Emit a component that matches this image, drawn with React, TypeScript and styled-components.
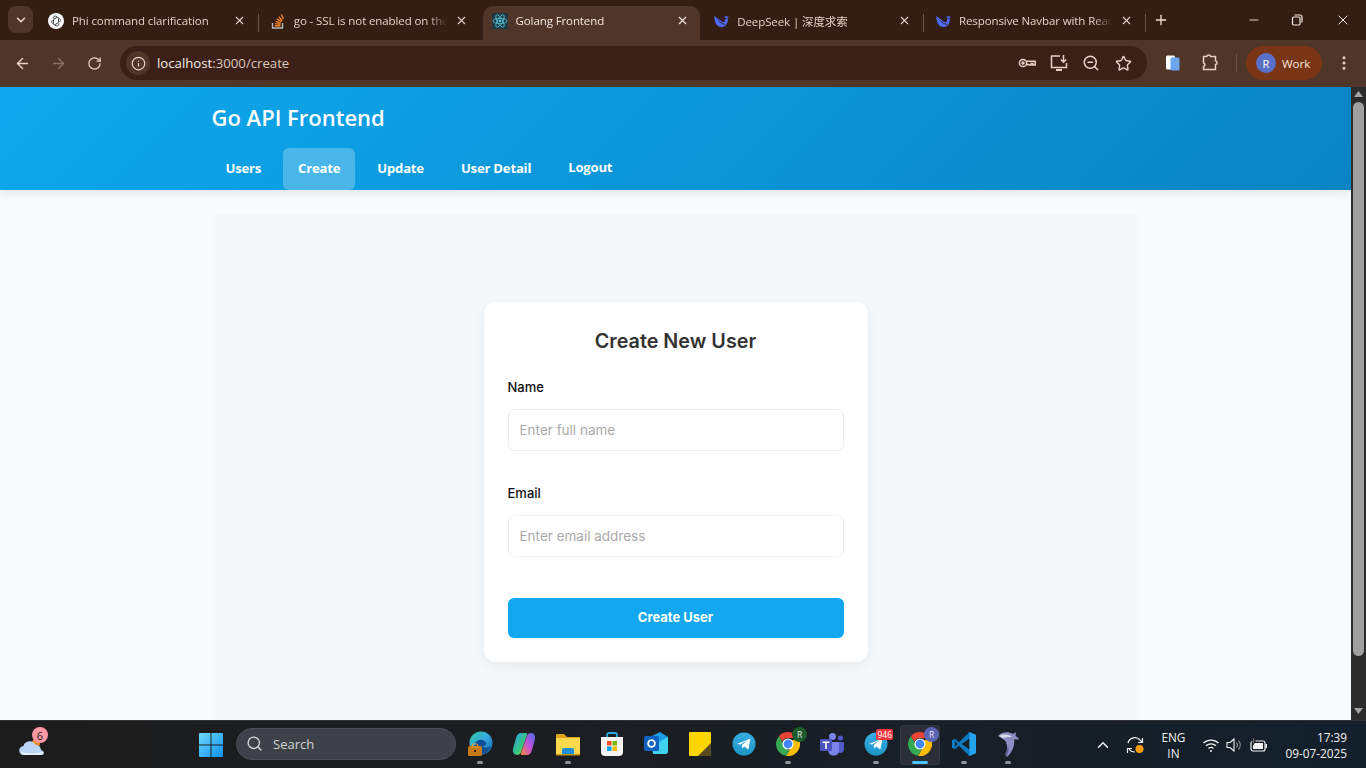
import styled, { createGlobalStyle } from 'styled-components'
import {
  ArrowLeft,
  ArrowRight,
  ChevronDown,
  ChevronUp,
  Info,
  Minus,
  MoreVertical,
  Plus,
  RotateCw,
  Search,
  Star,
  X,
  ZoomOut,
} from 'lucide-react'
import type { ReactNode } from 'react'

const uiFont = `'Open Sans', 'Noto Sans CJK SC', sans-serif`
const formFont = `'Inter', 'Open Sans', sans-serif`

/* --------------------- Style --------------------- */
const GlobalStyle = createGlobalStyle`
  * { box-sizing: border-box; }
  html, body { margin: 0; height: 100%; overflow: hidden; }
  body { font-family: ${uiFont}; }
`
const Screen = styled.div`
  height: 768px;
  display: flex;
  flex-direction: column;
  overflow: hidden;
`
const TabStrip = styled.div`
  height: 40px;
  flex: none;
  display: flex;
  align-items: flex-end;
  padding-left: 8px;
  background: #341d13;
`
const TabMenu = styled.div`
  width: 25px;
  height: 27px;
  margin: 0 6px 7px 0;
  display: flex;
  align-items: center;
  justify-content: center;
  border-radius: 8px;
  background: #503529;
  color: #f0e0d8;
`
const TabItem = styled.div<{ $active?: boolean; $divider?: boolean }>`
  position: relative;
  width: 217.75px;
  height: 34px;
  margin-right: 4px;
  padding: 0 11px 5px 9px;
  display: flex;
  align-items: center;
  gap: 8px;
  border-radius: 10px 10px 0 0;
  background: ${(p) => (p.$active ? '#503529' : 'transparent')};
  color: ${(p) => (p.$active ? '#f5e9e2' : '#e3d0c6')};
  &::after {
    content: '';
    display: ${(p) => (p.$divider ? 'block' : 'none')};
    position: absolute;
    right: -2px;
    top: 8px;
    width: 1px;
    height: 18px;
    background: #6e5548;
  }
`
const TabTitle = styled.span`
  flex: 1;
  min-width: 0;
  overflow: hidden;
  white-space: nowrap;
  font-size: 11.5px;
  letter-spacing: -0.1px;
  -webkit-mask-image: linear-gradient(to right, #000 88%, transparent);
  mask-image: linear-gradient(to right, #000 88%, transparent);
`
const NewTab = styled.div`
  margin: 0 0 6px 5px;
  height: 28px;
  display: flex;
  align-items: center;
  color: #f0e0d8;
`
const WindowControls = styled.div`
  margin-left: auto;
  align-self: stretch;
  display: flex;
  align-items: center;
  color: #f5ece7;
`
const WindowButton = styled.div`
  width: 46px;
  display: flex;
  justify-content: center;
  &:first-child {
    width: 40px;
  }
`
const Toolbar = styled.div`
  height: 47px;
  flex: none;
  display: flex;
  align-items: center;
  padding: 0 10px 1px 4px;
  background: #503529;
  color: #e8d2c7;
`
const NavIcon = styled.div<{ $dim?: boolean }>`
  width: 36px;
  display: flex;
  justify-content: center;
  color: ${(p) => (p.$dim ? '#8b7165' : '#e8d2c7')};
`
const Omnibox = styled.div`
  width: 1027px;
  height: 34px;
  margin-left: 8px;
  display: flex;
  align-items: center;
  padding: 0 14px 0 6px;
  border-radius: 17px;
  background: #3a2016;
`
const SiteInfo = styled.div`
  width: 24px;
  height: 24px;
  display: flex;
  align-items: center;
  justify-content: center;
  border-radius: 50%;
  background: #503529;
`
const Url = styled.span`
  margin-left: 7px;
  font-size: 13.2px;
  color: #dcc8bd;
  & b {
    font-weight: 400;
    color: #f7ece6;
  }
`
const OmniActions = styled.div`
  margin-left: auto;
  display: flex;
  align-items: center;
  gap: 12px;
`
const OmniAction = styled.div`
  width: 20px;
  display: flex;
  justify-content: center;
`
const ToolbarActions = styled.div`
  display: flex;
  align-items: center;
  margin-left: 17px;
`
const ExtensionSlot = styled.div`
  margin-left: 18px;
  display: flex;
`
const ToolbarDivider = styled.div`
  width: 1px;
  height: 18px;
  margin: 0 9px 0 16px;
  background: #6e5548;
`
const ProfilePill = styled.div`
  width: 76px;
  height: 34px;
  display: flex;
  align-items: center;
  gap: 6px;
  padding-left: 10px;
  border-radius: 17px;
  background: #7a3416;
  color: #f7e8df;
  font-size: 11.5px;
`
const Avatar = styled.div`
  width: 20px;
  height: 20px;
  display: flex;
  align-items: center;
  justify-content: center;
  border-radius: 50%;
  background: #5a6fc8;
  color: #fff;
  font-size: 11px;
`
const MenuDots = styled.div`
  margin-left: 13px;
  display: flex;
`
const Viewport = styled.div`
  flex: 1;
  min-height: 0;
  display: flex;
`
const Page = styled.div`
  flex: 1;
  min-width: 0;
  overflow: hidden;
  background: #f9fafc;
`
const Header = styled.header`
  position: relative;
  height: 103px;
  background: linear-gradient(135deg, #0ea8ee, #0a84c3);
  box-shadow: 0 2px 10px rgba(0, 0, 0, 0.1);
`
const HeaderInner = styled.div`
  width: 928px;
  margin: 0 auto;
`
const Brand = styled.h1`
  margin: 0;
  padding-top: 14px;
  font-size: 22px;
  line-height: 32px;
  font-weight: 600;
  color: #fff;
`
const NavBar = styled.nav`
  display: flex;
  gap: 7px;
  margin: 15px 0 0 -1px;
`
const NavLink = styled.a<{ $active?: boolean }>`
  height: 42px;
  padding: 0 15px 2px;
  display: flex;
  align-items: center;
  border-radius: 6px;
  font-size: 13.1px;
  font-weight: 700;
  letter-spacing: -0.2px;
  color: #fff;
  background: ${(p) => (p.$active ? 'rgba(255, 255, 255, 0.25)' : 'transparent')};
`
const LogoutButton = styled(NavLink)`
  padding-bottom: 4px;
`
const Main = styled.main`
  width: 928px;
  height: 600px;
  margin: 24px auto 0;
  padding-top: 88px;
  display: flex;
  justify-content: center;
  border-radius: 8px;
  background: #f5f8fb;
`
const Card = styled.form`
  width: 384px;
  height: 360px;
  padding: 24px;
  border-radius: 12px;
  background: #fff;
  box-shadow: 0 4px 12px rgba(0, 0, 0, 0.06);
  font-family: ${formFont};
`
const CardTitle = styled.h2`
  margin: 0 0 22px;
  font-size: 19.8px;
  line-height: 30px;
  font-weight: 600;
  text-align: center;
  color: #333;
`
const Field = styled.div`
  margin-bottom: 33px;
  &:last-of-type {
    margin-bottom: 41px;
  }
`
const Label = styled.label`
  display: block;
  margin-bottom: 13px;
  font-size: 13px;
  line-height: 18px;
  font-weight: 500;
  color: #111;
`
const Input = styled.input`
  width: 100%;
  height: 42px;
  padding: 0 11px;
  border: 1px solid #eeeef0;
  border-radius: 7px;
  outline: none;
  font-family: inherit;
  font-size: 13.5px;
  &::placeholder {
    color: #aaa;
    opacity: 1;
  }
`
const SubmitButton = styled.button`
  width: 100%;
  height: 40px;
  padding: 0 0 2px;
  border: 0;
  border-radius: 6px;
  background: #12a7ee;
  color: #fff;
  font-family: inherit;
  font-size: 13px;
  font-weight: 700;
`
const ScrollTrack = styled.div`
  width: 15px;
  flex: none;
  display: flex;
  flex-direction: column;
  align-items: center;
  padding-top: 4px;
  background: #2c2c2c;
  color: #a3a3a3;
`
const ScrollThumb = styled.div`
  width: 11px;
  height: 554px;
  margin: 5px 0 52px;
  border-radius: 6px;
  background: #a0a0a0;
`
const Taskbar = styled.div`
  height: 48px;
  flex: none;
  display: flex;
  align-items: center;
  border-top: 1px solid #303236;
  background: linear-gradient(90deg, #1c1c1c, #1b1e22 45%, #13202c);
  color: #f2f2f2;
`
const Weather = styled.div`
  position: relative;
  width: 28px;
  margin-left: 18px;
  padding-top: 3px;
  display: flex;
`
const WeatherBadge = styled.span`
  position: absolute;
  left: 14px;
  top: -4px;
  width: 16px;
  height: 16px;
  display: flex;
  align-items: center;
  justify-content: center;
  border-radius: 50%;
  background: #ff9aa4;
  color: #222;
  font-size: 11px;
`
const StartIcon = styled.div`
  display: flex;
  margin-left: 153px;
`
const SearchBox = styled.div`
  width: 220px;
  height: 32px;
  margin: 0 0 2px 13px;
  padding-left: 9px;
  display: flex;
  align-items: center;
  gap: 10px;
  border-radius: 16px;
  border: 1px solid #4c4f55;
  background: #3e4148;
  color: #d2d4d6;
  font-size: 13px;
`
const TaskIcons = styled.div`
  display: flex;
  margin-left: 2px;
`
const TaskCell = styled.div<{ $active?: boolean }>`
  position: relative;
  width: 40px;
  height: 40px;
  margin: 0 2px;
  display: flex;
  align-items: center;
  justify-content: center;
  padding-bottom: 2px;
  border-radius: 4px;
  background: ${(p) => (p.$active ? '#2c2f36' : 'transparent')};
  box-shadow: ${(p) => (p.$active ? 'inset 0 0 0 1px #34373d' : 'none')};
`
const RunDot = styled.span<{ $active?: boolean }>`
  position: absolute;
  left: 50%;
  bottom: 1px;
  width: ${(p) => (p.$active ? '16px' : '6px')};
  height: 3px;
  transform: translateX(-50%);
  border-radius: 2px;
  background: ${(p) => (p.$active ? '#4cc2ff' : '#8f9296')};
`
const AccountBadge = styled.span<{ $color: string }>`
  position: absolute;
  right: 1px;
  top: 2px;
  width: 15px;
  height: 15px;
  display: flex;
  align-items: center;
  justify-content: center;
  border-radius: 50%;
  background: ${(p) => p.$color};
  color: #e6e6e6;
  font-size: 8.5px;
`
const CountBadge = styled.span`
  position: absolute;
  right: 3px;
  top: 4px;
  height: 11px;
  padding: 0 1px;
  display: flex;
  align-items: center;
  border-radius: 2px;
  background: #f0393f;
  color: #fff;
  font-size: 8.5px;
`
const Tray = styled.div`
  margin-left: auto;
  display: flex;
  align-items: center;
  height: 100%;
  padding-right: 19px;
  font-size: 11.8px;
`
const TrayIcon = styled.div<{ $gap: number }>`
  display: flex;
  margin-left: ${(p) => p.$gap}px;
`
const Language = styled.div`
  width: 32px;
  margin-left: 12px;
  text-align: center;
  line-height: 16px;
`
const Clock = styled.div`
  margin-left: 16px;
  text-align: right;
  line-height: 16px;
`
/* ------------------------------------------------- */

const ChatIcon = () => (
  <svg width="16" height="16" viewBox="0 0 16 16">
    <circle cx="8" cy="8" r="8" fill="#fff" />
    <g fill="none" stroke="#4a4a4a" strokeWidth="1">
      <path d="M5 5.5a2.2 2.2 0 0 1 4-1.5l2.4 1.4a2.2 2.2 0 0 1 .1 3.6" />
      <path d="M11 10.5a2.2 2.2 0 0 1-4 1.5L4.6 10.6a2.2 2.2 0 0 1-.1-3.6" />
      <path d="M5.5 10.8V6.4L9 4.4M10.5 5.2v4.4L7 11.6" />
    </g>
  </svg>
)
const StackIcon = () => (
  <svg width="16" height="16" viewBox="0 0 16 16">
    <path d="M2.5 10v5h10v-5" fill="none" stroke="#bcbbbb" strokeWidth="1.4" />
    <path
      d="M4.8 12.7h5.6M5 10.6l5.4.8M5.6 8.3l5 1.8M7 5.9l4.4 2.9M8.9 3.8l3.3 3.9M11.4 1.2l2 4.8"
      stroke="#f48024"
      strokeWidth="1.4"
    />
  </svg>
)
const ReactIcon = () => (
  <svg width="16" height="16" viewBox="0 0 16 16">
    <rect width="16" height="16" rx="2" fill="#1d3a44" />
    <g fill="none" stroke="#58c4dc" strokeWidth="0.8">
      <ellipse cx="8" cy="8" rx="7" ry="2.7" />
      <ellipse cx="8" cy="8" rx="7" ry="2.7" transform="rotate(60 8 8)" />
      <ellipse cx="8" cy="8" rx="7" ry="2.7" transform="rotate(120 8 8)" />
    </g>
    <circle cx="8" cy="8" r="1.4" fill="#58c4dc" />
  </svg>
)
const WhaleIcon = () => (
  <svg width="16" height="16" viewBox="0 0 16 16">
    <path
      d="M1.500 3C1 7 2.500 13.500 8 14c3 .2 5-1.500 6-3.500 1-2 1-4 .5-5.500l1.300-1.800-2.200.3C13 3 12 3 11.500 3.500 12.500 6 12 8 11 9.500 8 8.500 4.500 5.500 1.500 3z"
      fill="#4d6bfe"
    />
    <path d="M5.500 7.500c1.500 2 3.800 3.500 6.500 4" fill="none" stroke="#341d13" strokeWidth="0.9" />
    <circle cx="12.800" cy="5.500" r="0.7" fill="#341d13" />
  </svg>
)
const KeyIcon = () => (
  <svg width="20" height="20" viewBox="0 0 20 20" fill="none" stroke="currentColor" strokeWidth="1.500">
    <circle cx="6" cy="10" r="3.600" />
    <circle cx="6" cy="10" r="1" />
    <path d="M9.600 8.300h8.600v3.700h-2.400v-1.500h-1.600v1.500h-2l-1.100-.6-1.500.3" />
  </svg>
)
const InstallIcon = () => (
  <svg width="20" height="20" viewBox="0 0 20 20" fill="none" stroke="currentColor" strokeWidth="1.500">
    <path d="M11 3H2.500v11.500h15V10" />
    <path d="M7 17h6" strokeWidth="2" />
    <path d="M14.500 2v7M11.800 6.500l2.700 2.700 2.700-2.700" />
  </svg>
)
const SidePanelIcon = () => (
  <svg width="18" height="18" viewBox="0 0 18 18">
    <rect x="2" y="1.500" width="9" height="14" rx="1.500" fill="#fff" />
    <rect x="6.500" y="3.500" width="9" height="13" rx="1.500" fill="#6aa7f0" />
  </svg>
)
const PuzzleIcon = () => (
  <svg width="20" height="20" viewBox="0 0 20 20" fill="none" stroke="currentColor" strokeWidth="1.500">
    <path d="M3.500 3.500h3.300a2 2 0 0 1 3.900 0h4.800v4.200a2 2 0 0 1 0 3.900v4.900H3.500v-3a2 2 0 0 0 0-3.800z" />
  </svg>
)
const MinimizeGlyph = () => <Minus size={14} strokeWidth={1.5} />
const RestoreGlyph = () => (
  <svg width="12" height="12" viewBox="0 0 12 12" fill="none" stroke="currentColor" strokeWidth="1.200">
    <rect x="1.500" y="3" width="7.500" height="8" rx="1.200" />
    <path d="M3.500 1h5.500a2 2 0 0 1 2 2v5.500" />
  </svg>
)
const CloudIcon = () => (
  <svg width="28" height="24" viewBox="0 0 28 24">
    <circle cx="18" cy="9" r="4" fill="#f08a24" />
    <path
      d="M6 21a4.500 4.500 0 0 1-.6-9 6.500 6.500 0 0 1 12.200-1 5 5 0 0 1 5.400 5c2 .5 3 2 2.900 3-.1 1.200-1 2-2.400 2z"
      fill="#bcd4f5"
    />
    <path d="M3 18c6 1.800 15 1.800 22 0v1c0 1.300-1 2-2.500 2H6c-2 0-3-1.400-3-3z" fill="#e8f0fb" />
  </svg>
)
const StartGlyph = () => (
  <svg width="24" height="24" viewBox="0 0 24 24">
    <defs>
      <linearGradient id="startFill" x1="0" y1="0" x2="1" y2="1">
        <stop offset="0" stopColor="#6fdcfb" />
        <stop offset="1" stopColor="#0f8ff0" />
      </linearGradient>
    </defs>
    <path
      d="M0 1a1 1 0 0 1 1-1h10.500v11.500H0zM12.500 0H23a1 1 0 0 1 1 1v10.500H12.500zM0 12.500h11.500V24H1a1 1 0 0 1-1-1zM12.500 12.500H24V23a1 1 0 0 1-1 1H12.500z"
      fill="url(#startFill)"
    />
  </svg>
)
const EdgeIcon = () => (
  <svg width="26" height="26" viewBox="0 0 26 26">
    <defs>
      <linearGradient id="edgeFill" x1="0" y1="0" x2="1" y2="1">
        <stop offset="0" stopColor="#2fc7a0" />
        <stop offset="0.5" stopColor="#35a9e0" />
        <stop offset="1" stopColor="#0c5ea8" />
      </linearGradient>
    </defs>
    <circle cx="14" cy="12" r="11.500" fill="url(#edgeFill)" />
    <path d="M8 13c1-5 9-6 11-1 .6 1.800-1 3-3.500 3 2 2 6 2 8 0-1 5-5 8-9 8-6-1-8-6-6.500-10z" fill="#0e4f96" />
    <rect x="1" y="15" width="14" height="10" rx="1.500" fill="#c77a1a" />
    <rect x="5.500" y="13" width="5" height="3" rx="1" fill="none" stroke="#e09a3a" strokeWidth="1.200" />
    <rect x="7" y="19" width="2" height="2" fill="#3a2508" />
  </svg>
)
const CopilotIcon = () => (
  <svg width="24" height="24" viewBox="0 0 24 24">
    <defs>
      <linearGradient id="copA" x1="0" y1="0" x2="1" y2="1">
        <stop offset="0" stopColor="#2d9cf0" />
        <stop offset="0.6" stopColor="#35c77a" />
        <stop offset="1" stopColor="#f5d33a" />
      </linearGradient>
      <linearGradient id="copB" x1="1" y1="0" x2="0" y2="1">
        <stop offset="0" stopColor="#4a6df0" />
        <stop offset="0.5" stopColor="#c54fd8" />
        <stop offset="1" stopColor="#f58a3a" />
      </linearGradient>
    </defs>
    <path d="M9 1h5c1 0 1.500 1 1 2L9 20c-.5 2-2 3-4 3-3 0-4.500-3-4-6L4 6c.7-3 2.500-5 5-5z" fill="url(#copA)" />
    <path d="M15 23h-5c-1 0-1.500-1-1-2l6-17c.5-2 2-3 4-3 3 0 4.500 3 4 6l-3 11c-.7 3-2.500 5-5 5z" fill="url(#copB)" />
  </svg>
)
const FolderIcon = () => (
  <svg width="24" height="24" viewBox="0 0 24 24">
    <path d="M0 3a1 1 0 0 1 1-1h7l3 3h13v18H0z" fill="#e0a31c" />
    <rect y="6" width="24" height="17" fill="#fbd84e" />
    <path d="M6 23v-5a2 2 0 0 1 2-2h8a2 2 0 0 1 2 2v5z" fill="#1d8fd8" />
    <rect y="22" width="24" height="1.500" fill="#c98f12" />
  </svg>
)
const StoreIcon = () => (
  <svg width="24" height="24" viewBox="0 0 24 24">
    <path d="M7 6V3a2 2 0 0 1 2-2h6a2 2 0 0 1 2 2v3" fill="none" stroke="#29a8e8" strokeWidth="1.800" />
    <path d="M1 5h22v15a4 4 0 0 1-4 4H5a4 4 0 0 1-4-4z" fill="#f5f5f5" />
    <rect x="7" y="9" width="4.500" height="4.500" fill="#f25022" />
    <rect x="12.500" y="9" width="4.500" height="4.500" fill="#7fba00" />
    <rect x="7" y="14.500" width="4.500" height="4.500" fill="#00a4ef" />
    <rect x="12.500" y="14.500" width="4.500" height="4.500" fill="#ffb900" />
  </svg>
)
const OutlookIcon = () => (
  <svg width="24" height="24" viewBox="0 0 24 24">
    <path d="M8 4l8-4 8 5v14a3 3 0 0 1-3 3H9z" fill="#1b9de2" />
    <path d="M8 14l16-9v14a3 3 0 0 1-3 3H9z" fill="#40d0f0" />
    <rect y="4" width="15" height="15" rx="1.500" fill="#0f62c0" />
    <circle cx="7.500" cy="11.500" r="3.400" fill="none" stroke="#fff" strokeWidth="1.800" />
  </svg>
)
const StickyIcon = () => (
  <svg width="22" height="24" viewBox="0 0 22 24">
    <rect width="22" height="24" rx="1" fill="#ffd500" />
    <path d="M9 24l13-13v12a1 1 0 0 1-1 1z" fill="#5a4a22" />
  </svg>
)
const TelegramIcon = () => (
  <svg width="24" height="24" viewBox="0 0 24 24">
    <defs>
      <linearGradient id="tgFill" x1="0.5" y1="0" x2="0.5" y2="1">
        <stop offset="0" stopColor="#37aee2" />
        <stop offset="1" stopColor="#1e96c8" />
      </linearGradient>
    </defs>
    <circle cx="12" cy="12" r="11.500" fill="url(#tgFill)" />
    <path d="M5 12l13.500-5.500-2.200 11-4-3-2 2-.6-3.300 5.800-5.200-7.200 4.500z" fill="#fff" />
  </svg>
)
const ChromeIcon = () => (
  <svg width="24" height="24" viewBox="0 0 24 24">
    <path d="M12 0a12 12 0 0 1 10.400 6H12a6 6 0 0 0-5.600 3.800L2.900 4.200A12 12 0 0 1 12 0z" fill="#ea4335" />
    <path d="M2.900 4.200L8 13a5 5 0 0 0 5.400 4.800l-3.200 6A12 12 0 0 1 2.900 4.200z" fill="#34a853" />
    <path d="M22.400 6A12 12 0 0 1 10.200 23.900l5-8.900A5 5 0 0 0 16 8.500z" fill="#fbbc04" />
    <circle cx="12" cy="12" r="5.600" fill="#fff" />
    <circle cx="12" cy="12" r="4.400" fill="#4285f4" />
  </svg>
)
const TeamsIcon = () => (
  <svg width="26" height="24" viewBox="0 0 26 24">
    <circle cx="13.500" cy="4.500" r="3.500" fill="#7b83eb" />
    <circle cx="21.500" cy="6" r="2.600" fill="#5059c9" />
    <path d="M17 10h8v7a4 4 0 0 1-4 4 4 4 0 0 1-4-4z" fill="#5059c9" />
    <path d="M9 10h11v9a5 5 0 0 1-5.500 4.500A5.500 5.500 0 0 1 9 18z" fill="#7b83eb" />
    <rect x="1" y="7" width="12" height="12" rx="1" fill="#4b53bc" />
    <path d="M3.500 9.500h7v1.500H7.800v6H6.200v-6H3.500z" fill="#fff" />
  </svg>
)
const VsCodeIcon = () => (
  <svg width="24" height="24" viewBox="0 0 24 24">
    <path d="M17.500 0L24 3v18l-6.500 3L7 13.800l-4.200 3.400L0 15.800v-7.600l2.800-1.400L7 10.200z" fill="#0a7cc4" />
    <path d="M17.500 6.500L9.800 12l7.700 5.500zM2.800 9.300v5.400L5.400 12z" fill="#1c1e22" />
    <path d="M17.500 0L24 3v18l-6.500 3z" fill="#26a3ee" />
  </svg>
)
const DolphinIcon = () => (
  <svg width="24" height="26" viewBox="0 0 24 26">
    <path
      d="M2 5C5 1 12 0 17 3l3-2-.5 4c1.500 1 3 2 3.500 3-2 1-4 .5-5 0 1 5-.5 11-5 16l-2 2-1-3c1.500-4 1.500-8 0-12-2-3-5-4-8-6z"
      fill="#8d8fc4"
    />
    <path d="M3 5c4-2 9-2 13 1-3 0-7 0-9 1z" fill="#d8dae8" />
    <path d="M12 15c1 3 .8 6-.5 8l-1.500 3-1-3c1.500-3 2-5 3-8z" fill="#5f6196" />
  </svg>
)
const SyncIcon = () => (
  <svg width="20" height="20" viewBox="0 0 20 20" fill="none" stroke="#f2f2f2" strokeWidth="1.200">
    <path d="M3 8a7 7 0 0 1 12-3l2 2M17.500 3v4.500H13" />
    <path d="M10 17a7 7 0 0 1-6-3M2.500 18v-4.500H7" />
    <circle cx="14.500" cy="14" r="4" fill="#f59b0c" stroke="none" />
  </svg>
)
const WifiIcon = () => (
  <svg width="18" height="18" viewBox="0 0 18 18" fill="none" stroke="#f2f2f2" strokeWidth="1.300">
    <path d="M1.500 7a11 11 0 0 1 15 0M4 9.800a7.500 7.500 0 0 1 10 0M6.500 12.400a3.800 3.800 0 0 1 5 0" />
    <circle cx="9" cy="15" r="1" fill="#f2f2f2" stroke="none" />
  </svg>
)
const SpeakerIcon = () => (
  <svg width="18" height="18" viewBox="0 0 18 18" fill="none" stroke="#f2f2f2" strokeWidth="1.100">
    <path d="M2 6.500h3L9 3v12l-4-3.500H2z" />
    <path d="M11.500 6.500a4 4 0 0 1 0 5M13.500 4.500a7 7 0 0 1 0 9" stroke="#9a9a9a" />
  </svg>
)
const BatteryIcon = () => (
  <svg width="20" height="18" viewBox="0 0 20 18" fill="none" stroke="#f2f2f2" strokeWidth="1.200">
    <rect x="2" y="5" width="14" height="10" rx="2" />
    <rect x="16.500" y="8" width="1.500" height="4" fill="#f2f2f2" stroke="none" />
    <rect x="4" y="7" width="10" height="6" fill="#f2f2f2" stroke="none" />
    <path d="M5 0L3 5h3L4 9" stroke="#1b1e22" fill="#f2f2f2" />
  </svg>
)

type TabData = { icon: ReactNode; title: string; active?: boolean; divider?: boolean }

const tabs: TabData[] = [
  { icon: <ChatIcon />, title: 'Phi command clarification', divider: true },
  { icon: <StackIcon />, title: 'go - SSL is not enabled on the server' },
  { icon: <ReactIcon />, title: 'Golang Frontend', active: true },
  { icon: <WhaleIcon />, title: 'DeepSeek | 深度求索', divider: true },
  { icon: <WhaleIcon />, title: 'Responsive Navbar with React', divider: true },
]

type TaskData = {
  icon: ReactNode
  running?: boolean
  active?: boolean
  badge?: ReactNode
}

const taskItems: TaskData[] = [
  { icon: <EdgeIcon />, running: true },
  { icon: <CopilotIcon /> },
  { icon: <FolderIcon />, running: true },
  { icon: <StoreIcon /> },
  { icon: <OutlookIcon /> },
  { icon: <StickyIcon /> },
  { icon: <TelegramIcon /> },
  {
    icon: <ChromeIcon />,
    running: true,
    badge: <AccountBadge $color="#1f5c2c">R</AccountBadge>,
  },
  { icon: <TeamsIcon /> },
  { icon: <TelegramIcon />, running: true, badge: <CountBadge>946</CountBadge> },
  {
    icon: <ChromeIcon />,
    running: true,
    active: true,
    badge: <AccountBadge $color="#5a64b8">R</AccountBadge>,
  },
  { icon: <VsCodeIcon />, running: true },
  { icon: <DolphinIcon />, running: true },
]

const App = () => {
  return (
    <Screen>
      <GlobalStyle />
      <TabStrip>
        <TabMenu>
          <ChevronDown size={14} strokeWidth={2.5} />
        </TabMenu>
        {tabs.map((tab) => (
          <TabItem key={tab.title} $active={tab.active} $divider={tab.divider}>
            {tab.icon}
            <TabTitle>{tab.title}</TabTitle>
            <X size={13} strokeWidth={2} />
          </TabItem>
        ))}
        <NewTab>
          <Plus size={16} strokeWidth={2} />
        </NewTab>
        <WindowControls>
          <WindowButton>
            <MinimizeGlyph />
          </WindowButton>
          <WindowButton>
            <RestoreGlyph />
          </WindowButton>
          <WindowButton>
            <X size={16} strokeWidth={1.5} />
          </WindowButton>
        </WindowControls>
      </TabStrip>

      <Toolbar>
        <NavIcon>
          <ArrowLeft size={17} />
        </NavIcon>
        <NavIcon $dim>
          <ArrowRight size={17} />
        </NavIcon>
        <NavIcon>
          <RotateCw size={15} />
        </NavIcon>
        <Omnibox>
          <SiteInfo>
            <Info size={15} />
          </SiteInfo>
          <Url>
            <b>localhost</b>:3000/create
          </Url>
          <OmniActions>
            <OmniAction>
              <KeyIcon />
            </OmniAction>
            <OmniAction>
              <InstallIcon />
            </OmniAction>
            <OmniAction>
              <ZoomOut size={18} />
            </OmniAction>
            <OmniAction>
              <Star size={17} />
            </OmniAction>
          </OmniActions>
        </Omnibox>
        <ToolbarActions>
          <SidePanelIcon />
          <ExtensionSlot>
            <PuzzleIcon />
          </ExtensionSlot>
          <ToolbarDivider />
          <ProfilePill>
            <Avatar>R</Avatar>
            Work
          </ProfilePill>
          <MenuDots>
            <MoreVertical size={18} />
          </MenuDots>
        </ToolbarActions>
      </Toolbar>

      <Viewport>
        <Page>
          <Header>
            <HeaderInner>
              <Brand>Go API Frontend</Brand>
              <NavBar>
                <NavLink>Users</NavLink>
                <NavLink $active>Create</NavLink>
                <NavLink>Update</NavLink>
                <NavLink>User Detail</NavLink>
                <LogoutButton>Logout</LogoutButton>
              </NavBar>
            </HeaderInner>
          </Header>
          <Main>
            <Card>
              <CardTitle>Create New User</CardTitle>
              <Field>
                <Label>Name</Label>
                <Input placeholder="Enter full name" />
              </Field>
              <Field>
                <Label>Email</Label>
                <Input placeholder="Enter email address" />
              </Field>
              <SubmitButton type="button">Create User</SubmitButton>
            </Card>
          </Main>
        </Page>
        <ScrollTrack>
          <svg width="9" height="6" viewBox="0 0 9 6">
            <path d="M4.500 0L9 6H0z" fill="currentColor" />
          </svg>
          <ScrollThumb />
          <svg width="9" height="6" viewBox="0 0 9 6">
            <path d="M0 0h9L4.500 6z" fill="currentColor" />
          </svg>
        </ScrollTrack>
      </Viewport>

      <Taskbar>
        <Weather>
          <CloudIcon />
          <WeatherBadge>6</WeatherBadge>
        </Weather>
        <StartIcon>
          <StartGlyph />
        </StartIcon>
        <SearchBox>
          <Search size={17} />
          Search
        </SearchBox>
        <TaskIcons>
          {taskItems.map((item, i) => (
            <TaskCell key={i} $active={item.active}>
              {item.icon}
              {item.badge}
              {item.running && <RunDot $active={item.active} />}
            </TaskCell>
          ))}
        </TaskIcons>
        <Tray>
          <ChevronUp size={18} />
          <TrayIcon $gap={13}>
            <SyncIcon />
          </TrayIcon>
          <Language>
            ENG
            <br />
            IN
          </Language>
          <TrayIcon $gap={13}>
            <WifiIcon />
          </TrayIcon>
          <TrayIcon $gap={5}>
            <SpeakerIcon />
          </TrayIcon>
          <TrayIcon $gap={6}>
            <BatteryIcon />
          </TrayIcon>
          <Clock>
            17:39
            <br />
            09-07-2025
          </Clock>
        </Tray>
      </Taskbar>
    </Screen>
  )
}
export default App
